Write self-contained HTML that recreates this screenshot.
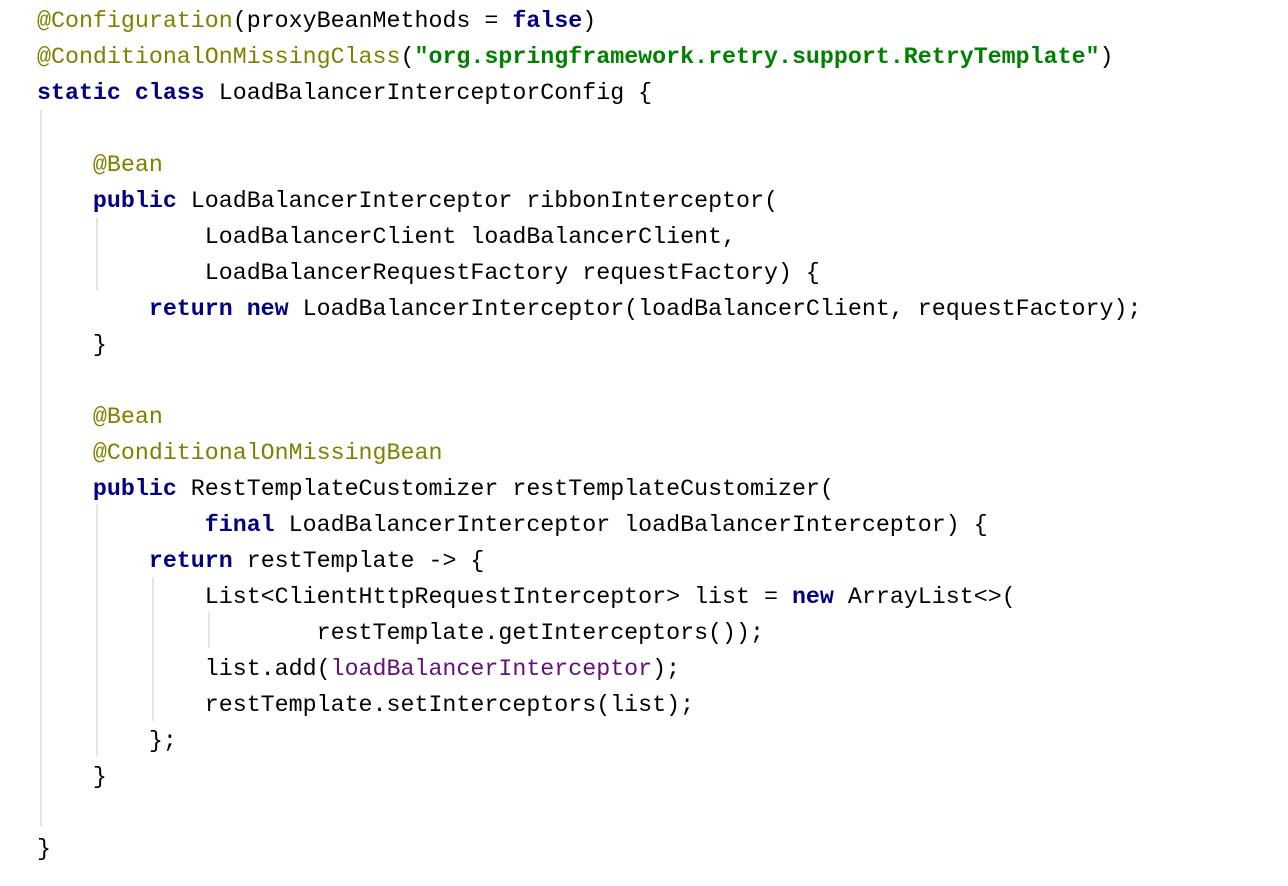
<!DOCTYPE html>
<html><head><style>
body{margin:0;background:#fff;width:1288px;height:886px;overflow:hidden;position:relative}
pre{margin:0;position:absolute;left:37px;top:3px;font-family:"Liberation Mono",monospace;font-size:23.3px;line-height:36px;color:#000}
.a{color:#808000}.k{color:#000080;font-weight:bold}.s{color:#008000;font-weight:bold}.p{color:#660e7a}
.g{position:absolute;width:2px;background:#e4e4e4}
</style></head><body>
<div class="g" style="left:40px;top:110px;height:716px"></div>
<div class="g" style="left:96px;top:218px;height:72px"></div>
<div class="g" style="left:96px;top:504px;height:252px"></div>
<div class="g" style="left:152px;top:577px;height:144px"></div>
<div class="g" style="left:208px;top:612px;height:36px"></div>
<pre><span class="a">@Configuration</span>(proxyBeanMethods = <span class="k">false</span>)
<span class="a">@ConditionalOnMissingClass</span>(<span class="s">"org.springframework.retry.support.RetryTemplate"</span>)
<span class="k">static class</span> LoadBalancerInterceptorConfig {

    <span class="a">@Bean</span>
    <span class="k">public</span> LoadBalancerInterceptor ribbonInterceptor(
            LoadBalancerClient loadBalancerClient,
            LoadBalancerRequestFactory requestFactory) {
        <span class="k">return new</span> LoadBalancerInterceptor(loadBalancerClient, requestFactory);
    }

    <span class="a">@Bean</span>
    <span class="a">@ConditionalOnMissingBean</span>
    <span class="k">public</span> RestTemplateCustomizer restTemplateCustomizer(
            <span class="k">final</span> LoadBalancerInterceptor loadBalancerInterceptor) {
        <span class="k">return</span> restTemplate -&gt; {
            List&lt;ClientHttpRequestInterceptor&gt; list = <span class="k">new</span> ArrayList&lt;&gt;(
                    restTemplate.getInterceptors());
            list.add(<span class="p">loadBalancerInterceptor</span>);
            restTemplate.setInterceptors(list);
        };
    }

}</pre>
</body></html>
